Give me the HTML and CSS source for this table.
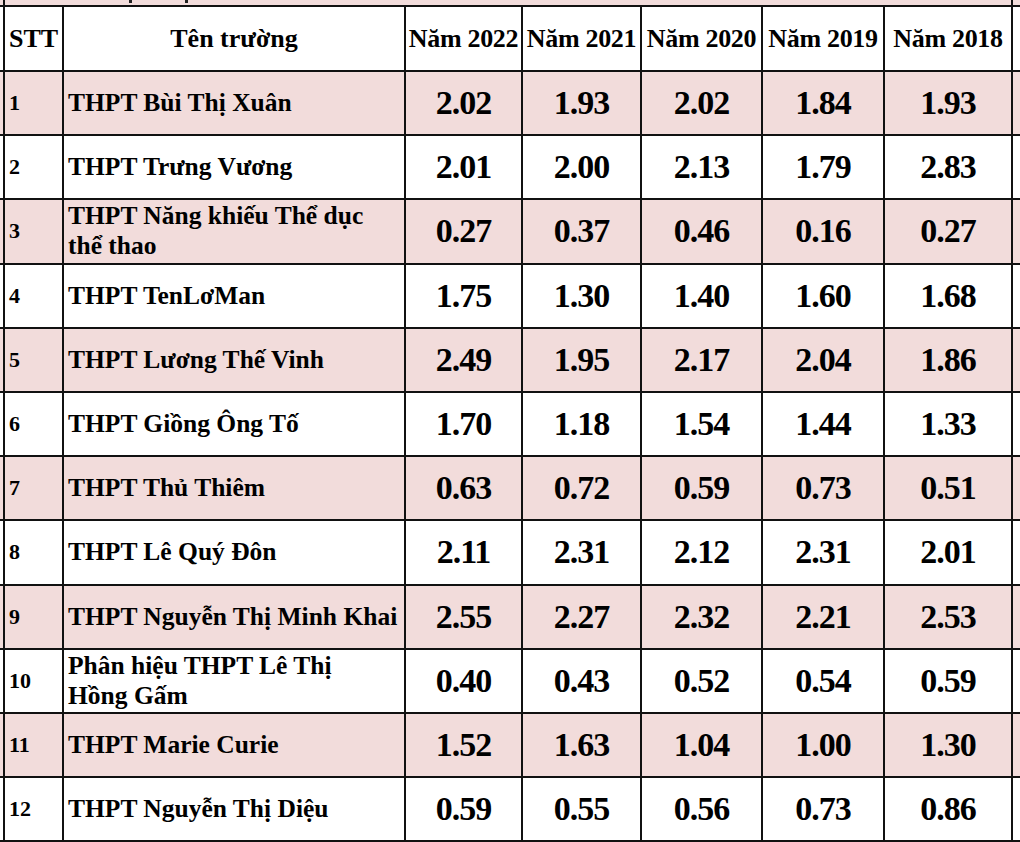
FILE: index.html
```html
<!DOCTYPE html>
<html lang="vi">
<head>
<meta charset="utf-8">
<title>Tỷ lệ chọi</title>
<link rel="stylesheet" href="styles.css">
</head>
<body>
<div class="frame">
<table class="grid">
  <colgroup>
    <col class="c-pre"><col class="c-stt"><col class="c-name">
    <col class="c-y1"><col class="c-y2"><col class="c-y3"><col class="c-y4"><col class="c-y5"><col class="c-post">
  </colgroup>
  <tr class="title pink"><td></td><td colspan="7" class="title-cell"><span class="dot1"></span><span class="dot2"></span></td><td></td></tr>
  <tr class="head">
    <td></td><th>STT</th><th>Tên trường</th><th>Năm 2022</th><th>Năm 2021</th><th>Năm 2020</th><th>Năm 2019</th><th>Năm 2018</th><th></th>
  </tr>
  <tr class="pink"><td></td><td class="stt">1</td><td class="name">THPT Bùi Thị Xuân</td><td class="num">2.02</td><td class="num">1.93</td><td class="num">2.02</td><td class="num">1.84</td><td class="num">1.93</td><td></td></tr>
  <tr><td></td><td class="stt">2</td><td class="name">THPT Trưng Vương</td><td class="num">2.01</td><td class="num">2.00</td><td class="num">2.13</td><td class="num">1.79</td><td class="num">2.83</td><td></td></tr>
  <tr class="pink"><td></td><td class="stt">3</td><td class="name">THPT Năng khiếu Thể dục<br>thể thao</td><td class="num">0.27</td><td class="num">0.37</td><td class="num">0.46</td><td class="num">0.16</td><td class="num">0.27</td><td></td></tr>
  <tr><td></td><td class="stt">4</td><td class="name">THPT TenLơMan</td><td class="num">1.75</td><td class="num">1.30</td><td class="num">1.40</td><td class="num">1.60</td><td class="num">1.68</td><td></td></tr>
  <tr class="pink"><td></td><td class="stt">5</td><td class="name">THPT Lương Thế Vinh</td><td class="num">2.49</td><td class="num">1.95</td><td class="num">2.17</td><td class="num">2.04</td><td class="num">1.86</td><td></td></tr>
  <tr><td></td><td class="stt">6</td><td class="name">THPT Giồng Ông Tố</td><td class="num">1.70</td><td class="num">1.18</td><td class="num">1.54</td><td class="num">1.44</td><td class="num">1.33</td><td></td></tr>
  <tr class="pink"><td></td><td class="stt">7</td><td class="name">THPT Thủ Thiêm</td><td class="num">0.63</td><td class="num">0.72</td><td class="num">0.59</td><td class="num">0.73</td><td class="num">0.51</td><td></td></tr>
  <tr><td></td><td class="stt">8</td><td class="name">THPT Lê Quý Đôn</td><td class="num">2.11</td><td class="num">2.31</td><td class="num">2.12</td><td class="num">2.31</td><td class="num">2.01</td><td></td></tr>
  <tr class="pink"><td></td><td class="stt">9</td><td class="name">THPT Nguyễn Thị Minh Khai</td><td class="num">2.55</td><td class="num">2.27</td><td class="num">2.32</td><td class="num">2.21</td><td class="num">2.53</td><td></td></tr>
  <tr><td></td><td class="stt">10</td><td class="name">Phân hiệu THPT Lê Thị<br>Hồng Gấm</td><td class="num">0.40</td><td class="num">0.43</td><td class="num">0.52</td><td class="num">0.54</td><td class="num">0.59</td><td></td></tr>
  <tr class="pink"><td></td><td class="stt">11</td><td class="name">THPT Marie Curie</td><td class="num">1.52</td><td class="num">1.63</td><td class="num">1.04</td><td class="num">1.00</td><td class="num">1.30</td><td></td></tr>
  <tr><td></td><td class="stt">12</td><td class="name">THPT Nguyễn Thị Diệu</td><td class="num">0.59</td><td class="num">0.55</td><td class="num">0.56</td><td class="num">0.73</td><td class="num">0.86</td><td></td></tr>
  <tr class="pink"><td></td><td></td><td></td><td></td><td></td><td></td><td></td><td></td><td></td></tr>
</table>
</div>
</body>
</html>
```

FILE: styles.css
```css
html, body {
  margin: 0;
  padding: 0;
  background: #ffffff;
}

.frame {
  width: 1020px;
  height: 842px;
  overflow: hidden;
}

.grid {
  border-collapse: collapse;
  table-layout: fixed;
  width: 1100px;
  margin-left: -28px;
  margin-top: -25px;
  font-family: "Liberation Serif", "Times New Roman", serif;
  font-weight: bold;
  color: #000;
}

.c-pre { width: 31px; }
.c-stt { width: 59px; }
.c-name { width: 342px; }
.c-y1 { width: 117px; }
.c-y2 { width: 119px; }
.c-y3 { width: 121px; }
.c-y4 { width: 122px; }
.c-y5 { width: 128px; }
.c-post { width: 61px; }

.grid td, .grid th {
  border: 2px solid #111;
  padding: 0;
  overflow: hidden;
  white-space: nowrap;
}

.grid tr { height: 64.2px; }
.grid tr.title { height: 30px; }
.grid tr.head { height: 65px; }

.pink td, .pink th { background: #f2dcdb; }

.title-cell {
  position: relative;
}

.dot1, .dot2 {
  position: absolute;
  bottom: 2px;
  width: 3px;
  height: 3px;
  background: #222;
}
.dot1 { left: 124px; }
.dot2 { left: 180px; }

.head th {
  font-size: 26px;
  text-align: center;
  vertical-align: middle;
  font-weight: bold;
}

.head th:nth-child(n+4) {
  letter-spacing: -0.3px;
}

.stt {
  font-size: 22px;
  padding-left: 4px !important;
  vertical-align: middle;
}

.name {
  font-size: 25.5px;
  line-height: 30px;
  padding-left: 4px !important;
  vertical-align: middle;
}

.num {
  font-size: 34px;
  letter-spacing: -1px;
  text-align: center;
  vertical-align: middle;
}
```
